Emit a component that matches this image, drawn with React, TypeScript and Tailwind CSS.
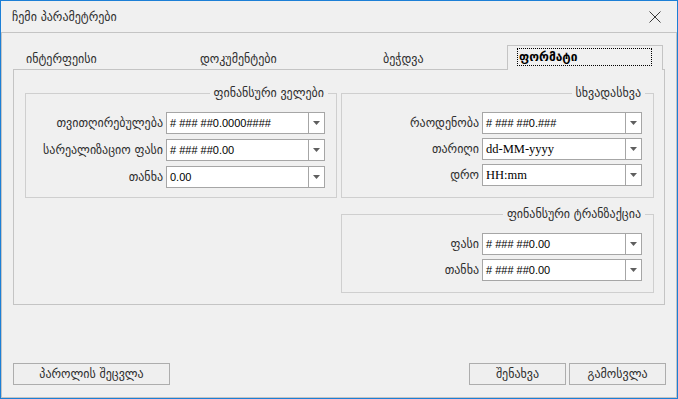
import React from "react";

const geo = "font-['DejaVu_Sans',sans-serif]";

type ComboProps = {
  value: string;
  serif?: boolean;
  wide?: boolean;
};

function Combo({ value, serif, wide }: ComboProps) {
  return (
    <div
      className={`flex h-[22px] shrink-0 border border-[#a6a6a6] bg-white ${wide ? "w-[160px]" : "w-[159px]"}`}
    >
      <div
        className={`flex flex-1 items-center pl-[3px] text-black ${
          serif
            ? "font-['Liberation_Serif',serif] text-[12.5px]"
            : "font-['Liberation_Sans',sans-serif] text-[11px]"
        }`}
      >
        {value}
      </div>
      <div className="flex w-[16px] items-center justify-center border-l border-[#a6a6a6]">
        <svg width="7" height="4" viewBox="0 0 7 4">
          <path d="M0 0h7L3.5 4z" fill="#5f5f5f" />
        </svg>
      </div>
    </div>
  );
}

function Row({ label, children }: { label: string; children: React.ReactNode }) {
  return (
    <div className="flex items-center justify-end gap-[3px]">
      <span className="text-[12px] text-[#2e2e2e]">{label}</span>
      {children}
    </div>
  );
}

function Group({
  title,
  className,
  children,
}: {
  title: string;
  className: string;
  children: React.ReactNode;
}) {
  return (
    <div className={`relative border border-[#cfcfcf] pr-[11px] pt-[18px] ${className}`}>
      <span className="absolute right-[8px] top-[-9px] bg-[#f0f0f0] px-[4px] text-[12px] leading-[16px] text-[#2e2e2e]">
        {title}
      </span>
      {children}
    </div>
  );
}

export default function App() {
  return (
    <div className={`flex h-[399px] w-[678px] flex-col border border-[#1c7fd6] bg-[#f0f0f0] ${geo}`}>
      {/* title bar */}
      <div className="flex h-[31px] shrink-0 items-center justify-between pl-[11px] pr-[16px]">
        <span className="text-[12px] text-[#2e2e2e]">ჩემი პარამეტრები</span>
        <svg width="12" height="12" viewBox="0 0 12 12">
          <path d="M0.5 0.5l11 11M11.5 0.5l-11 11" stroke="#3a3a3a" strokeWidth="1" />
        </svg>
      </div>

      <div className="flex flex-1 flex-col border border-[#c4c4c4] px-[11px] pt-[11px]">
        {/* tabs */}
        <div className="flex h-[25px] items-end text-[12px] text-[#2e2e2e]">
          <div className="flex h-[24px] w-[164px] items-center pl-[13px] pt-[3px]">ინტერფეისი</div>
          <div className="flex h-[24px] w-[164px] items-center pl-[23px] pt-[3px]">დოკუმენტები</div>
          <div className="flex h-[24px] w-[164px] items-center pl-[42px] pt-[3px]">ბეჭდვა</div>
          <div className="relative z-10 mb-[-1px] ml-[2px] h-[25px] w-[156px] border-l border-r border-t border-[#c4c4c4] bg-[#f0f0f0] pl-[9px] pt-[2px]">
            <div className="flex h-[18px] w-[135px] items-center border border-dotted border-black pl-[1px] font-bold text-black">
              ფორმატი
            </div>
          </div>
        </div>

        {/* tab page */}
        <div className="flex h-[236px] w-[652px] gap-[4px] border border-[#c4c4c4] pl-[11px] pt-[23px]">
          <Group title="ფინანსური ველები" className="h-[105px] w-[312px]">
            <div className="flex flex-col gap-[5px]">
              <Row label="თვითღირებულება">
                <Combo value="# ### ##0.0000####" />
              </Row>
              <Row label="სარეალიზაციო ფასი">
                <Combo value="# ### ##0.00" />
              </Row>
              <Row label="თანხა">
                <Combo value="0.00" />
              </Row>
            </div>
          </Group>

          <div className="flex flex-col gap-[16px]">
            <Group title="სხვადასხვა" className="h-[105px] w-[313px]">
              <div className="flex flex-col gap-[4px]">
                <Row label="რაოდენობა">
                  <Combo value="# ### ##0.###" wide />
                </Row>
                <Row label="თარიღი">
                  <Combo value="dd-MM-yyyy" serif wide />
                </Row>
                <Row label="დრო">
                  <Combo value="HH:mm" serif wide />
                </Row>
              </div>
            </Group>
            <Group title="ფინანსური ტრანზაქცია" className="h-[79px] w-[313px]">
              <div className="flex flex-col gap-[4px]">
                <Row label="ფასი">
                  <Combo value="# ### ##0.00" wide />
                </Row>
                <Row label="თანხა">
                  <Combo value="# ### ##0.00" wide />
                </Row>
              </div>
            </Group>
          </div>
        </div>

        <div className="flex-1" />

        {/* bottom buttons */}
        <div className="flex items-center justify-between pb-[12px] text-[12px] text-[#2e2e2e]">
          <button className="flex h-[22px] w-[157px] items-center justify-center border border-[#adadad] bg-[#efefef]">
            პაროლის შეცვლა
          </button>
          <div className="mr-[-1px] flex gap-[3px]">
            <button className="flex h-[22px] w-[97px] items-center justify-center border border-[#adadad] bg-[#efefef]">
              შენახვა
            </button>
            <button className="flex h-[22px] w-[97px] items-center justify-center border border-[#adadad] bg-[#efefef]">
              გამოსვლა
            </button>
          </div>
        </div>
      </div>
    </div>
  );
}
